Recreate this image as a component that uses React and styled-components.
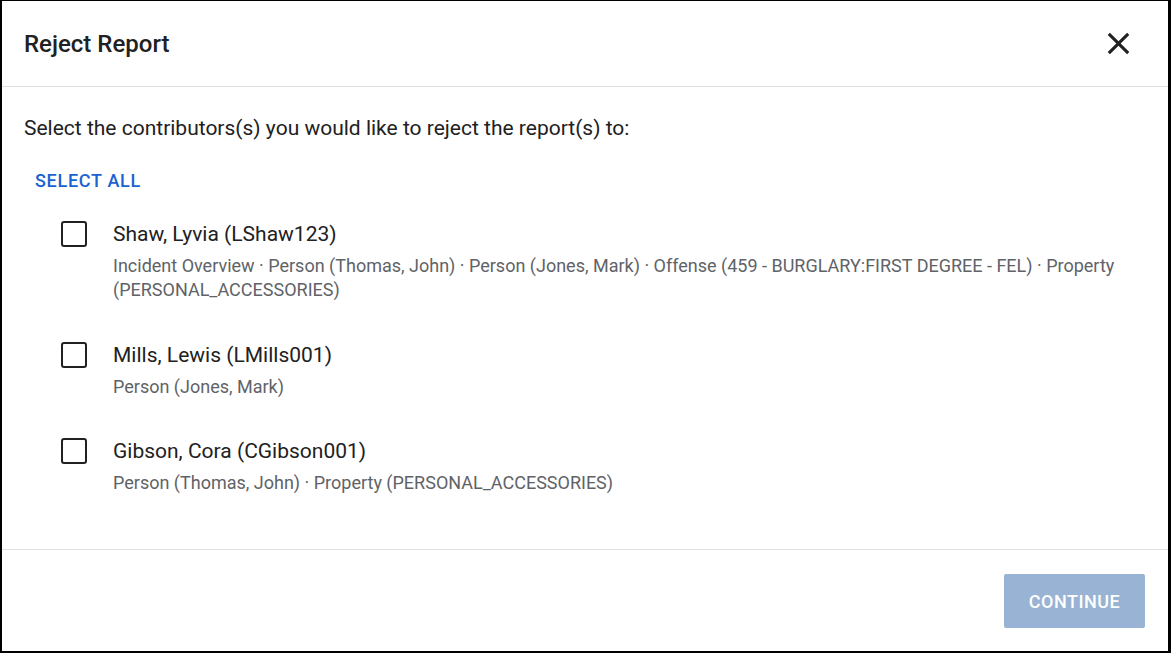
import styled, { createGlobalStyle } from 'styled-components'
import { useState } from 'react'

const contributors = [
  {
    id: 'LShaw123',
    name: 'Shaw, Lyvia',
    sections: [
      'Incident Overview',
      'Person (Thomas, John)',
      'Person (Jones, Mark)',
      'Offense (459 - BURGLARY:FIRST DEGREE - FEL)',
      'Property (PERSONAL_ACCESSORIES)',
    ],
  },
  { id: 'LMills001', name: 'Mills, Lewis', sections: ['Person (Jones, Mark)'] },
  {
    id: 'CGibson001',
    name: 'Gibson, Cora',
    sections: ['Person (Thomas, John)', 'Property (PERSONAL_ACCESSORIES)'],
  },
]

function App() {
  const [checked, setChecked] = useState({})
  const anyChecked = Object.values(checked).some(Boolean)

  return (
    <>
      <GlobalStyle />
      <Dialog>
        <Header>
          <Title>Reject Report</Title>
          <CloseButton aria-label="close">
            <svg viewBox="0 0 24 24">
              <path
                d="M19 6.41 17.59 5 12 10.59 6.41 5 5 6.41 10.59 12 5 17.59 6.41 19 12 13.41 17.59 19 19 17.59 13.41 12z"
                fill="#212121"
              />
            </svg>
          </CloseButton>
        </Header>

        <Body>
          <Intro>Select the contributors(s) you would like to reject the report(s) to:</Intro>
          <TextButton
            onClick={() =>
              setChecked(Object.fromEntries(contributors.map((c) => [c.id, true])))
            }
          >
            Select All
          </TextButton>
          <List>
            {contributors.map((c) => (
              <Row key={c.id}>
                <Box
                  $on={checked[c.id]}
                  onClick={() => setChecked({ ...checked, [c.id]: !checked[c.id] })}
                />
                <Info>
                  <Name>
                    {c.name} ({c.id})
                  </Name>
                  <Sections>{c.sections.join(' · ')}</Sections>
                </Info>
              </Row>
            ))}
          </List>
        </Body>

        <Footer>
          <ContinueButton disabled={!anyChecked}>Continue</ContinueButton>
        </Footer>
      </Dialog>
    </>
  )
}

const GlobalStyle = createGlobalStyle`
  html, body {
    margin: 0;
    background: #fff;
  }
  body {
    font-family: Roboto, "Liberation Sans", sans-serif;
    color: #212121;
  }
`

const Dialog = styled.div`
  box-sizing: border-box;
  width: 1171px;
  height: 653px;
  display: flex;
  flex-direction: column;
  background: #fff;
  border: 2px solid #000;
  border-right-width: 3px;
  border-top-width: 1px;
`

const Header = styled.header`
  height: 85px;
  flex-shrink: 0;
  display: flex;
  align-items: center;
  justify-content: space-between;
  padding: 0 38px 0 22px;
  border-bottom: 1px solid #e0e0e0;
`

const Title = styled.h2`
  margin: 0;
  font-size: 24px;
  font-weight: 500;
  color: #212121;
`

const CloseButton = styled.button`
  border: none;
  background: none;
  padding: 0;
  width: 24px;
  height: 24px;
  cursor: pointer;

  svg {
    display: block;
    width: 37px;
    height: 37px;
    margin: -6.5px;
  }
`

const Body = styled.main`
  flex: 1;
  padding: 28px 22px 0;
`

const Intro = styled.p`
  margin: 0;
  font-size: 21px;
  line-height: 26px;
`

const TextButton = styled.button`
  margin: 23px 0 0 0;
  border: none;
  background: none;
  padding: 6px 11px;
  font-family: inherit;
  font-size: 18px;
  font-weight: 500;
  letter-spacing: 0.7px;
  text-transform: uppercase;
  color: #1a62d2;
  cursor: pointer;
`

const List = styled.ul`
  list-style: none;
  margin: 18px 0 0;
  padding: 0 0 0 37px;
  display: flex;
  flex-direction: column;
  gap: 33.5px;
`

const Row = styled.li`
  display: flex;
  align-items: flex-start;
  gap: 26px;
`

const Box = styled.span`
  box-sizing: border-box;
  width: 26px;
  height: 26px;
  margin-top: 6px;
  flex-shrink: 0;
  border: 2.5px solid #212121;
  border-radius: 3px;
  background: ${(p) => (p.$on ? '#1a62d2' : '#fff')};
  border-color: ${(p) => (p.$on ? '#1a62d2' : '#212121')};
  cursor: pointer;
`

const Info = styled.div`
  display: flex;
  flex-direction: column;
  gap: 7px;
`

const Name = styled.div`
  font-size: 21px;
  line-height: 26px;
  margin-top: 6px;
  color: #212121;
`

const Sections = styled.div`
  font-size: 18px;
  line-height: 24px;
  color: #5f6368;
`

const Footer = styled.footer`
  height: 101px;
  flex-shrink: 0;
  display: flex;
  align-items: center;
  justify-content: flex-end;
  padding: 0 23px;
  border-top: 1px solid #e0e0e0;
`

const ContinueButton = styled.button`
  width: 141px;
  height: 54px;
  border: none;
  border-radius: 2px;
  background: #1a62d2;
  color: #fff;
  font-family: inherit;
  font-size: 18px;
  font-weight: 500;
  letter-spacing: 0.5px;
  text-transform: uppercase;
  margin-top: 1px;

  &:disabled {
    background: #98b3d3;
  }
`

export default App
